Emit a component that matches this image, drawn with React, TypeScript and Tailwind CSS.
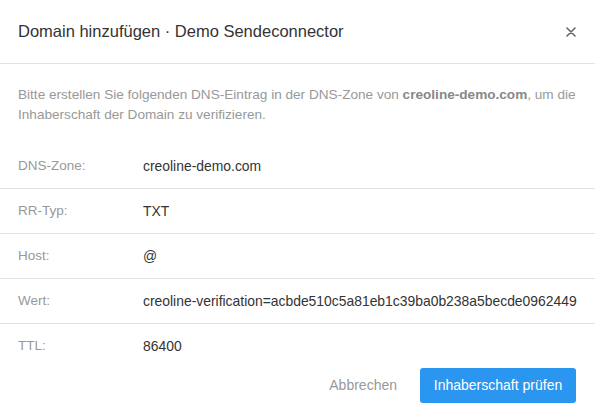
const ROWS = [
  { label: "DNS-Zone:", value: "creoline-demo.com" },
  { label: "RR-Typ:", value: "TXT" },
  { label: "Host:", value: "@" },
  { label: "Wert:", value: "creoline-verification=acbde510c5a81eb1c39ba0b238a5becde0962449" },
  { label: "TTL:", value: "86400" },
];

export default function App() {
  return (
    <div className="w-[595px] h-[419px] bg-white font-['Liberation_Sans',Arial,sans-serif] text-[#333] overflow-hidden">
      {/* Header */}
      <div className="h-[64px] flex items-center justify-between pl-[18px] pr-[18px] border-b border-[#e3e3e3]">
        <h1 className="text-[16.5px] text-[#333] leading-none">Domain hinzufügen · Demo Sendeconnector</h1>
        <button className="w-[12px] h-[12px] flex items-center justify-center text-[#666]">
          <svg width="10" height="10" viewBox="0 0 10 10" fill="none" stroke="currentColor" strokeWidth="1.6" strokeLinecap="round">
            <path d="M1 1L9 9M9 1L1 9" />
          </svg>
        </button>
      </div>

      {/* Intro */}
      <p className="px-[18px] pt-[21px] pb-[19px] text-[13.6px] leading-[20px] text-[#999]">
        Bitte erstellen Sie folgenden DNS-Eintrag in der DNS-Zone von{" "}
        <span className="font-bold text-[#888]">creoline-demo.com</span>, um die Inhaberschaft der Domain zu verifizieren.
      </p>

      {/* Record table */}
      <div>
        {ROWS.map((row, i) => (
          <div
            key={row.label}
            className={`flex items-center text-[13.9px] ${i < ROWS.length - 1 ? "h-[45px] border-b border-[#e3e3e3]" : "h-[44px]"}`}
          >
            <span className="w-[143px] pl-[18px] text-[#999] text-[13.5px]">{row.label}</span>
            <span className="text-[#333] whitespace-nowrap">{row.value}</span>
          </div>
        ))}
      </div>

      {/* Footer */}
      <div className="flex justify-end items-center gap-[8px] pr-[19px]">
        <button className="h-[35px] px-[15px] text-[14px] text-[#999]">Abbrechen</button>
        <button className="h-[35px] w-[156px] rounded-[3px] bg-[#2b96ef] text-white text-[14px] font-medium">
          Inhaberschaft prüfen
        </button>
      </div>
    </div>
  );
}
